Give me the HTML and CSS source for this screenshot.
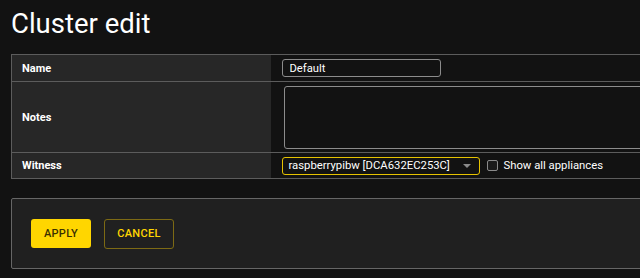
FILE: index.html
```html
<!DOCTYPE html>
<html>
<head>
<meta charset="utf-8">
<link rel="stylesheet" href="styles.css">
</head>
<body>
<div class="page">
  <h1 class="title">Cluster edit</h1>
  <table class="form-table">
    <tr class="row-name">
      <th class="label">Name</th>
      <td class="field"><input class="text-input" type="text" value="Default"></td>
    </tr>
    <tr class="row-notes">
      <th class="label">Notes</th>
      <td class="field"><textarea class="notes"></textarea></td>
    </tr>
    <tr class="row-witness">
      <th class="label">Witness</th>
      <td class="field">
        <div class="witness">
          <div class="select">
            <span class="select-text">raspberrypibw [DCA632EC253C]</span>
            <svg class="caret" width="8" height="4" viewBox="0 0 8 4"><path d="M0 0h8L4 4z" fill="#8a8a8a"/></svg>
          </div>
          <label class="check"><span class="box"></span><span class="check-text">Show all appliances</span></label>
        </div>
      </td>
    </tr>
  </table>
  <div class="actions">
    <button class="btn btn-apply">APPLY</button>
    <button class="btn btn-cancel">CANCEL</button>
  </div>
</div>
</body>
</html>
```

FILE: styles.css
```css
html, body {
  margin: 0;
  padding: 0;
  background: #121212;
  overflow: hidden;
}
body {
  font-family: Roboto, "Liberation Sans", sans-serif;
  color: #fff;
}
.page {
  width: 720px;
  padding: 0 0 0 11px;
}
.title {
  margin: 0;
  padding-top: 8px;
  height: 54px;
  box-sizing: border-box;
  font-size: 27.5px;
  font-weight: 400;
  line-height: 32px;
  color: #fff;
}
.form-table {
  width: 100%;
  border-collapse: collapse;
  border: 1px solid #5c5c5c;
}
.form-table th, .form-table td {
  border-top: 1px solid #5c5c5c;
  padding: 0;
}
.label {
  width: 259px;
  background: #272727;
  text-align: left;
  font-size: 11px;
  font-weight: 700;
  padding-left: 10px !important;
  vertical-align: middle;
  box-sizing: border-box;
}
.field {
  background: #121212;
  padding-left: 11px !important;
  vertical-align: middle;
}
.row-name { height: 27px; }
.row-notes { height: 71px; }
.row-witness { height: 26px; }
.text-input {
  display: block;
  width: 159px;
  height: 18px;
  box-sizing: border-box;
  background: #121212;
  border: 1px solid #8c8c8c;
  border-radius: 3px;
  color: #fff;
  font-family: Roboto, "Liberation Sans", sans-serif;
  font-size: 11.2px;
  padding: 0 0 0 7px;
  margin: 0;
  outline: none;
}
.notes {
  display: block;
  width: 420px;
  height: 63px;
  box-sizing: border-box;
  margin: 0 0 0 2px;
  background: #121212;
  border: 1px solid #8c8c8c;
  border-radius: 3px;
  resize: none;
  outline: none;
}
.witness {
  display: flex;
  align-items: center;
  gap: 7px;
}
.select {
  width: 198px;
  height: 18px;
  box-sizing: border-box;
  border: 1px solid #e6c200;
  border-radius: 3px;
  display: flex;
  align-items: center;
  justify-content: space-between;
  padding: 0 8px 0 6px;
  font-size: 11.3px;
  color: #fff;
}
.caret { display: block; }
.check {
  display: flex;
  align-items: center;
  gap: 6px;
  font-size: 11.3px;
  color: #fff;
}
.box {
  width: 11px;
  height: 11px;
  border: 1px solid #8a8a8a;
  border-radius: 2px;
  box-sizing: border-box;
  background: #1a1a1a;
}
.actions {
  margin-top: 19px;
  height: 71px;
  box-sizing: border-box;
  background: #202020;
  border: 1px solid #666;
  border-radius: 2px;
  display: flex;
  align-items: center;
  gap: 13px;
  padding: 0 0 0 19px;
}
.btn {
  font-family: Roboto, "Liberation Sans", sans-serif;
  font-size: 11px;
  font-weight: 500;
  letter-spacing: 0.3px;
  border-radius: 3px;
  height: 29px;
  margin: 0;
  cursor: pointer;
}
.btn-apply {
  width: 60px;
  background: #ffd600;
  color: #3a3000;
  border: none;
}
.btn-cancel {
  width: 70px;
  height: 30px;
  background: transparent;
  color: #ffd600;
  border: 1px solid #7d6a14;
}
```
